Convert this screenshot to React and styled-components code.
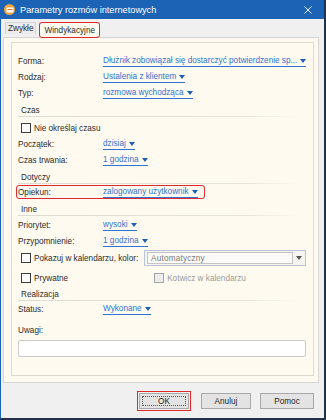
import React from "react";
import styled, { createGlobalStyle } from "styled-components";

const GlobalStyle = createGlobalStyle`
  html, body {
    margin: 0;
    padding: 0;
    background: #f0f0f0;
  }
  * {
    box-sizing: border-box;
  }
`;

const Window = styled.div`
  width: 326px;
  height: 420px;
  display: flex;
  flex-direction: column;
  background: #f0f0f0;
  border-left: 1px solid #1c63b6;
  border-right: 2px solid #22324a;
  border-bottom: 2px solid #22324a;
  font-family: "Liberation Sans", Arial, sans-serif;
  font-size: 8.2px;
  color: #2b2b2b;
  overflow: hidden;
`;

const TitleBar = styled.div`
  height: 19px;
  flex: none;
  display: flex;
  align-items: center;
  padding-left: 3px;
  gap: 5px;
  background: #1c63b6;
  color: #fff;
  font-size: 9.2px;
`;

const AppIcon = styled.div`
  width: 11px;
  height: 11px;
  border-radius: 50%;
  background: #f0a43c;
  display: flex;
  align-items: center;
  justify-content: center;
`;

const Title = styled.span`
  flex: 1;
  white-space: nowrap;
`;

const Close = styled.div`
  width: 20px;
  margin-right: 6px;
  display: flex;
  justify-content: center;
`;

const TabStrip = styled.div`
  height: 18px;
  flex: none;
  display: flex;
  align-items: flex-end;
  padding-left: 4px;
  gap: 3px;
`;

const Tab = styled.div`
  position: relative;
  height: ${(p) => (p.$active ? "15px" : "12px")};
  margin-bottom: ${(p) => (p.$active ? "0" : "3px")};
  padding: 0 ${(p) => (p.$active ? "4px" : "2px")};
  display: flex;
  align-items: center;
  background: ${(p) => (p.$active ? "#fffaef" : "#ececec")};
  border: 1px solid #d4d4d4;
  border-bottom: none;
  white-space: nowrap;

  ${(p) =>
    p.$marked &&
    `
    &::after {
      content: "";
      position: absolute;
      left: -1px;
      right: -1px;
      top: -1px;
      bottom: -1px;
      border: 1.5px solid #e0282e;
      border-radius: 3px;
    }
  `}
`;

const Page = styled.div`
  margin: 0 5px 0 2px;
  height: 346px;
  flex: none;
  padding: 4px 4px 6px 7px;
  background: #fffaef;
  border: 1px solid #d6d6d6;
`;

const Panel = styled.div`
  height: 100%;
  display: flex;
  flex-direction: column;
  padding: 10px 6px 0 6px;
  border: 1px solid #dedacd;
  background: #fffaef;
`;

const Row = styled.div`
  position: relative;
  height: ${(p) => p.$h || 16}px;
  margin-top: ${(p) => p.$mt || 0}px;
  display: flex;
  align-items: center;
  flex: none;

  ${(p) =>
    p.$marked &&
    `
    &::after {
      content: "";
      position: absolute;
      left: -2px;
      width: 187px;
      top: 1px;
      bottom: 1px;
      border: 1.5px solid #e0282e;
      border-radius: 3px;
    }
  `}
`;

const Label = styled.span`
  width: ${(p) => p.$w || 85}px;
  flex: none;
  white-space: nowrap;
`;

const LinkValue = styled.span`
  display: inline-flex;
  align-items: center;
  gap: 3px;
  color: #2e72d2;
  border-bottom: 1px solid #2e72d2;
  line-height: 10px;
  white-space: nowrap;
`;

const Caret = styled.span`
  width: 0;
  height: 0;
  border-left: 3.5px solid transparent;
  border-right: 3.5px solid transparent;
  border-top: 4px solid #1d5fb8;
`;

const SectionHeader = styled.div`
  height: 12px;
  margin-top: ${(p) => p.$mt || 4}px;
  padding-left: 3px;
  display: flex;
  align-items: center;
  flex: none;
  border-bottom: 1px solid transparent;
  border-image: linear-gradient(to right, #dedbd0 0%, #e6e3d9 80%, rgba(255, 250, 239, 0) 100%) 1;
  margin-right: 8px;
`;

const CheckBox = styled.span`
  width: 10px;
  height: 10px;
  flex: none;
  border: 1px solid ${(p) => (p.$disabled ? "#a5a5a5" : "#3a3a3a")};
  background: ${(p) => (p.$disabled ? "#ededed" : "#fff")};
  margin-left: 3px;
  margin-right: 3px;
`;

const CheckLabel = styled.span`
  color: ${(p) => (p.$disabled ? "#9a9a9a" : "inherit")};
  white-space: nowrap;
`;

const Spacer = styled.div`
  flex: 1;
`;

const Combo = styled.div`
  width: 162px;
  height: 16px;
  margin-left: auto;
  margin-right: 1px;
  display: flex;
  align-items: center;
  padding: 1px 0 1px 2px;
  border: 1px solid #b9c5d6;
  background: #f6f4ee;
`;

const ComboField = styled.div`
  flex: 1;
  height: 100%;
  display: flex;
  align-items: center;
  padding-left: 3px;
  border: 1px solid #c4c4c4;
  background: #fbfaf6;
  color: #7a7a7a;
  letter-spacing: 0.2px;
`;

const ComboArrow = styled.div`
  width: 12px;
  display: flex;
  justify-content: center;
  &::before {
    content: "";
    border-left: 3.5px solid transparent;
    border-right: 3.5px solid transparent;
    border-top: 4px solid #555;
  }
`;

const SecondCheck = styled.div`
  display: flex;
  align-items: center;
  margin-left: 83px;
`;

const TextInput = styled.div`
  height: 17px;
  margin-top: 2px;
  margin-right: 1px;
  flex: none;
  background: #fff;
  border: 1px solid #cbcbcb;
  border-radius: 2px;
`;

const Buttons = styled.div`
  display: flex;
  justify-content: flex-end;
  gap: 9px;
  padding: 10px 10px 0 0;
`;

const Button = styled.div`
  position: relative;
  width: ${(p) => p.$w || 50}px;
  height: 16px;
  margin-right: ${(p) => p.$mr || 0}px;
  display: flex;
  align-items: center;
  justify-content: center;
  background: #e3e3e3;
  border: 1px solid #a9a9a9;
  color: #1e1e1e;

  ${(p) =>
    p.$focused &&
    `
    &::before {
      content: "";
      position: absolute;
      inset: 2px;
      border: 1px dotted #555;
    }
    &::after {
      content: "";
      position: absolute;
      inset: -3px;
      border: 1.5px solid #e0282e;
    }
  `}
`;

const LinkRow = ({ label, value, mt, marked }) => (
  <Row $mt={mt} $marked={marked}>
    <Label>{label}</Label>
    <LinkValue>
      {value}
      <Caret />
    </LinkValue>
  </Row>
);

const Section = ({ title, mt }) => <SectionHeader $mt={mt}>{title}</SectionHeader>;

const App = () => (
  <>
    <GlobalStyle />
    <Window>
      <TitleBar>
        <AppIcon>
          <svg width="8" height="6" viewBox="0 0 8 6">
            <rect x="0.5" y="0.5" width="7" height="5" rx="1" fill="#fff" />
            <rect x="1.5" y="2" width="5" height="1" fill="#e07a1f" />
          </svg>
        </AppIcon>
        <Title>Parametry rozmów internetowych</Title>
        <Close>
          <svg width="8" height="8" viewBox="0 0 8 8">
            <path d="M0.5 0.5 L7.5 7.5 M7.5 0.5 L0.5 7.5" stroke="#fff" strokeWidth="0.9" />
          </svg>
        </Close>
      </TitleBar>

      <TabStrip>
        <Tab>Zwykłe</Tab>
        <Tab $active $marked>
          Windykacyjne
        </Tab>
      </TabStrip>

      <Page>
        <Panel>
          <Row>
            <Label>Forma:</Label>
            <LinkValue>
              Dłużnik zobowiązał się dostarczyć potwierdzenie sp...
              <Caret />
            </LinkValue>
          </Row>
          <LinkRow label="Rodzaj:" value="Ustalenia z klientem" />
          <LinkRow label="Typ:" value="rozmowa wychodząca" />

          <Section title="Czas" />
          <Row $mt={3}>
            <CheckBox />
            <CheckLabel>Nie określaj czasu</CheckLabel>
          </Row>
          <LinkRow label="Początek:" value="dzisiaj" />
          <LinkRow label="Czas trwania:" value="1 godzina" />

          <Section title="Dotyczy" />
          <LinkRow label="Opiekun:" value="zalogowany użytkownik" marked />

          <Section title="Inne" />
          <LinkRow label="Priorytet:" value="wysoki" mt={1} />
          <LinkRow label="Przypomnienie:" value="1 godzina" />
          <Row $h={18}>
            <CheckBox />
            <CheckLabel>Pokazuj w kalendarzu, kolor:</CheckLabel>
            <Combo>
              <ComboField>Automatyczny</ComboField>
              <ComboArrow />
            </Combo>
          </Row>
          <Row $mt={3}>
            <CheckBox />
            <CheckLabel>Prywatne</CheckLabel>
            <SecondCheck>
              <CheckBox $disabled />
              <CheckLabel $disabled>Kotwicz w kalendarzu</CheckLabel>
            </SecondCheck>
            <Spacer />
          </Row>

          <Section title="Realizacja" mt={3} />
          <LinkRow label="Status:" value="Wykonane" />
          <Row $mt={5}>
            <Label>Uwagi:</Label>
          </Row>
          <TextInput />
        </Panel>
      </Page>

      <Buttons>
        <Button $focused $mr={3}>
          OK
        </Button>
        <Button>Anuluj</Button>
        <Button $w={54}>Pomoc</Button>
      </Buttons>
    </Window>
  </>
);

export default App;
